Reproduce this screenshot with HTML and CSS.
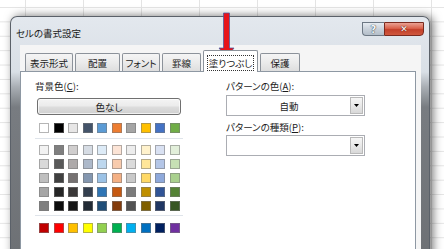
FILE: index.html
```html
<!DOCTYPE html>
<html lang="ja">
<head>
<meta charset="utf-8">
<title>セルの書式設定</title>
<link rel="stylesheet" href="styles.css">
</head>
<body>
<div class="sheet">
  <div class="window">
    <div class="titlebar">
      <span class="title">セルの書式設定</span>
      <div class="caption-btns">
        <span class="cbtn help">?</span>
        <span class="cbtn close">✕</span>
      </div>
    </div>
    <div class="client">
      <div class="tabs">
        <span class="tab w48">表示形式</span>
        <span class="tab w45">配置</span>
        <span class="tab w38">フォント</span>
        <span class="tab w39">罫線</span>
        <span class="tab active w55"><span class="focus">塗りつぶし</span></span>
        <span class="tab w40">保護</span>
      </div>
      <div class="panel">
        <div class="col-left">
          <div class="label">背景色(<u>C</u>):</div>
          <div class="btn">色なし</div>
          <div class="swrow first">
            <i style="background:#ffffff"></i><i style="background:#000000"></i><i style="background:#e7e6e6"></i><i style="background:#44546a"></i><i style="background:#5b9bd5"></i><i style="background:#ed7d31"></i><i style="background:#a5a5a5"></i><i style="background:#ffc000"></i><i style="background:#4472c4"></i><i style="background:#70ad47"></i>
          </div>
          <div class="sep"></div>
          <div class="grid">
            <div class="swrow">
              <i style="background:#f2f2f2"></i><i style="background:#7f7f7f"></i><i style="background:#d0cece"></i><i style="background:#d6dce4"></i><i style="background:#ddebf7"></i><i style="background:#fce4d6"></i><i style="background:#ededed"></i><i style="background:#fff2cc"></i><i style="background:#d9e1f2"></i><i style="background:#e2efda"></i>
            </div>
            <div class="swrow">
              <i style="background:#d9d9d9"></i><i style="background:#595959"></i><i style="background:#aeaaaa"></i><i style="background:#adb9ca"></i><i style="background:#bdd7ee"></i><i style="background:#f8cbad"></i><i style="background:#dbdbdb"></i><i style="background:#ffe699"></i><i style="background:#b4c6e7"></i><i style="background:#c6e0b4"></i>
            </div>
            <div class="swrow">
              <i style="background:#bfbfbf"></i><i style="background:#404040"></i><i style="background:#757171"></i><i style="background:#8497b0"></i><i style="background:#9bc2e6"></i><i style="background:#f4b084"></i><i style="background:#c9c9c9"></i><i style="background:#ffd966"></i><i style="background:#8ea9db"></i><i style="background:#a9d08e"></i>
            </div>
            <div class="swrow">
              <i style="background:#a6a6a6"></i><i style="background:#262626"></i><i style="background:#3a3838"></i><i style="background:#333f4f"></i><i style="background:#2f75b5"></i><i style="background:#c65911"></i><i style="background:#7b7b7b"></i><i style="background:#bf8f00"></i><i style="background:#305496"></i><i style="background:#548235"></i>
            </div>
            <div class="swrow">
              <i style="background:#808080"></i><i style="background:#0d0d0d"></i><i style="background:#161616"></i><i style="background:#222b35"></i><i style="background:#1f4e78"></i><i style="background:#833c0c"></i><i style="background:#525252"></i><i style="background:#806000"></i><i style="background:#203764"></i><i style="background:#375623"></i>
            </div>
          </div>
          <div class="sep sep2"></div>
          <div class="swrow std">
            <i style="background:#c00000"></i><i style="background:#ff0000"></i><i style="background:#ffc000"></i><i style="background:#ffff00"></i><i style="background:#92d050"></i><i style="background:#00b050"></i><i style="background:#00b0f0"></i><i style="background:#0070c0"></i><i style="background:#002060"></i><i style="background:#7030a0"></i>
          </div>
        </div>
        <div class="col-right">
          <div class="label">パターンの色(<u>A</u>):</div>
          <div class="combo">
            <span class="combo-text">自動</span>
            <span class="combo-btn"><svg width="5" height="3" viewBox="0 0 5 3"><path d="M0 0h5L2.5 3z" fill="#000"/></svg></span>
          </div>
          <div class="label label2">パターンの種類(<u>P</u>):</div>
          <div class="combo combo2">
            <span class="combo-text"></span>
            <span class="combo-btn"><svg width="5" height="3" viewBox="0 0 5 3"><path d="M0 0h5L2.5 3z" fill="#000"/></svg></span>
          </div>
        </div>
      </div>
    </div>
  </div>
  <svg class="arrow" width="444" height="249" viewBox="0 0 444 249">
    <path d="M223.5 13H229.5V48H234L226.5 58L219 48H223.5Z" fill="#e8141b" stroke="#3d5aa6" stroke-width="0.7"/>
  </svg>
</div>
</body>
</html>
```
FILE: styles.css
```css
* { box-sizing: border-box; }
html, body { margin: 0; padding: 0; background: #fff; }
body {
  font-family: "Noto Sans CJK JP", "Noto Sans", sans-serif;
  font-size: 9.5px;
  color: #1c1c1c;
  font-feature-settings: "palt";
}
.sheet {
  position: relative;
  width: 444px;
  height: 249px;
  overflow: hidden;
  padding: 16px 0 0 10px;
  background-color: #fff;
  background-image:
    linear-gradient(to right, #e4e4e4 1px, transparent 1px),
    linear-gradient(to bottom, #e4e4e4 1px, transparent 1px);
  background-size: 58px 100%, 100% 14.4px;
  background-position: 25px 0, 0 7px;
}
.window {
  width: 420px;
  height: 260px;
  border: 1px solid #5b6169;
  border-bottom: none;
  border-radius: 7px 7px 0 0;
  background: linear-gradient(180deg, #e3e8ee 0px, #d9dfe6 55px, #a9aeb4 70px, #787c81 90px, #6c6f73 100%);
  box-shadow: 3px 0 10px rgba(0,0,0,0.55);
  display: flex;
  flex-direction: column;
}
.titlebar {
  height: 28px;
  flex: none;
  display: flex;
  justify-content: space-between;
  align-items: flex-start;
  padding: 0 5px 0 5px;
}
.title {
  margin-top: 10px;
  line-height: 12px;
  color: #1a1a1a;
}
.caption-btns {
  display: flex;
  margin-top: 5px;
}
.cbtn {
  height: 14px;
  display: flex;
  align-items: center;
  justify-content: center;
  font-family: "DejaVu Sans", sans-serif;
  font-weight: bold;
  color: #fff;
}
.help {
  width: 22px;
  border: 1px solid #6d7884;
  border-right: none;
  border-radius: 0 0 0 4px;
  background: linear-gradient(180deg, #e6ebf1 0%, #c9d1da 50%, #b4bec9 100%);
  font-size: 10px;
  color: #f4f6f8;
  text-shadow: 0 0 1px #34404c, 0 0 1px #34404c;
}
.close {
  width: 40px;
  border: 1px solid #7a2a1f;
  border-radius: 0 0 4px 0;
  background: linear-gradient(180deg, #eaa294 0%, #d9614b 45%, #c3402a 55%, #d0583e 100%);
  font-size: 9px;
  text-shadow: 0 0 1px #5a1a10, 0 0 1px #5a1a10;
}
.client {
  flex: 1;
  margin: 0 8px 0 9px;
  background: #f5f5f5;
  padding-right: 5px;
  display: flex;
  flex-direction: column;
}
.tabs {
  display: flex;
  align-items: flex-end;
  gap: 2px;
  padding: 8px 0 0 5px;
  height: 26px;
  flex: none;
}
.tab {
  height: 18px;
  border: 1px solid #8c929a;
  border-bottom: none;
  border-radius: 2px 2px 0 0;
  background: linear-gradient(180deg, #f5f5f5 0%, #ebebeb 50%, #dedede 100%);
  display: flex;
  align-items: center;
  justify-content: center;
  line-height: 12px;
  white-space: nowrap;
}
.w48 { width: 48px; }
.w45 { width: 45px; }
.w38 { width: 38px; }
.w39 { width: 39px; }
.w55 { width: 55px; }
.w40 { width: 40px; }
.tab.active {
  height: 22px;
  margin-bottom: -1px;
  background: #fff;
  position: relative;
  z-index: 1;
  padding-top: 2px;
}
.focus {
  border: 1px dotted #333;
  padding: 1px 1px;
  line-height: 12px;
}
.panel {
  flex: 1;
  background: #fff;
  border: 1px solid #8e98a3;
  display: flex;
  gap: 43px;
  padding: 8px 0 0 14px;
}
.col-left { width: 148px; }
.col-right { width: 139px; }
.label {
  line-height: 13px;
  height: 13px;
  white-space: nowrap;
}
.label u { text-decoration: underline; text-underline-offset: 1px; }
.btn {
  margin: 5px 0 0 2px;
  width: 144px;
  height: 17px;
  border: 1px solid #707070;
  border-radius: 3px;
  background: linear-gradient(180deg, #f4f4f4 0%, #ebebeb 48%, #dddddd 52%, #d0d0d0 100%);
  box-shadow: inset 0 0 0 1px rgba(255,255,255,0.7);
  display: flex;
  align-items: center;
  justify-content: center;
  line-height: 12px;
}
.swrow {
  display: flex;
  gap: 4.5px;
  padding-left: 4px;
  height: 10px;
}
.swrow i {
  display: block;
  width: 10px;
  height: 10px;
  border: 1px solid rgba(120,120,120,0.55);
}
.swrow.first { margin-top: 8px; }
.sep {
  height: 1px;
  background: #dfe4ea;
  margin-top: 5px;
}
.grid {
  margin-top: 6px;
  display: flex;
  flex-direction: column;
  gap: 4px;
}
.sep.sep2 { margin-top: 4px; }
.swrow.std { margin-top: 7px; }
.combo {
  margin-top: 2px;
  height: 21px;
  border: 1px solid #abadb3;
  background: #fff;
  display: flex;
  padding: 1px;
}
.combo-text {
  flex: 1;
  display: flex;
  align-items: center;
  justify-content: center;
  line-height: 12px;
}
.combo-btn {
  width: 13px;
  border: 1px solid #b9b9b9;
  background: linear-gradient(180deg, #f6f6f6 0%, #e9e9e9 50%, #d8d8d8 100%);
  display: flex;
  align-items: center;
  justify-content: center;
}
.label2 { margin-top: 5px; }
.combo2 { margin-top: 1px; }
.arrow {
  position: absolute;
  left: 0;
  top: 0;
  pointer-events: none;
}
```
